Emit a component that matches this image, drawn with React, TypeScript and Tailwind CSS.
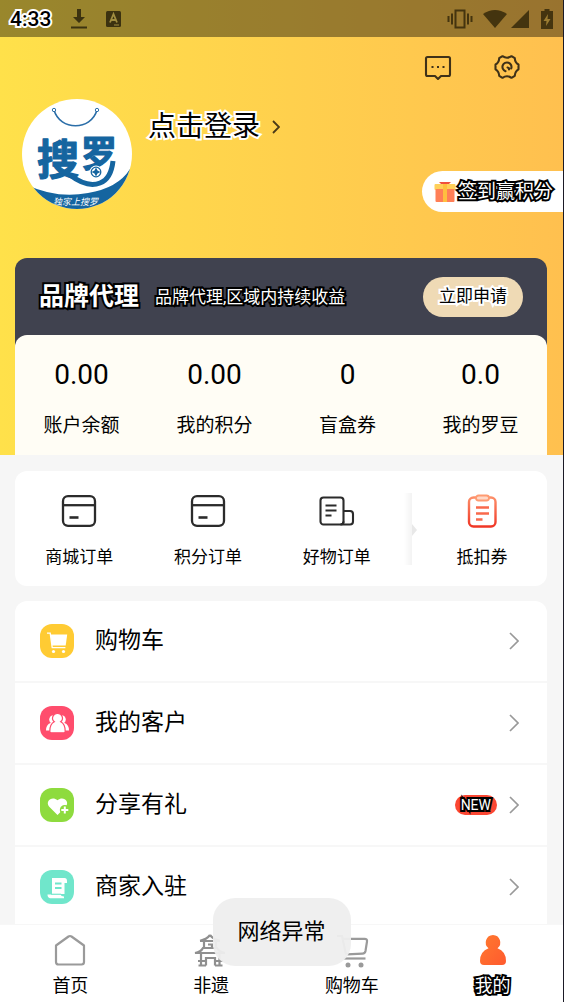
import type { ReactNode } from "react";

const darkOutline =
	"text-white [-webkit-text-stroke:4px_#000] [paint-order:stroke_fill]";
const lightOutline =
	"text-black [-webkit-text-stroke:4px_#fff] [paint-order:stroke_fill]";

const stats = [
	{ value: "0.00", label: "账户余额" },
	{ value: "0.00", label: "我的积分" },
	{ value: "0", label: "盲盒券" },
	{ value: "0.0", label: "我的罗豆" },
];

const orders = [
	{ label: "商城订单", icon: <CardIcon /> },
	{ label: "积分订单", icon: <CardIcon /> },
	{ label: "好物订单", icon: <DocIcon /> },
];

const menu = [
	{ label: "购物车", color: "bg-[#ffcb33]", icon: <CartGlyph />, isNew: false },
	{ label: "我的客户", color: "bg-[#ff4d6d]", icon: <PeopleGlyph />, isNew: false },
	{ label: "分享有礼", color: "bg-[#8edb3e]", icon: <HeartGlyph />, isNew: true },
	{ label: "商家入驻", color: "bg-[#70e6cb]", icon: <ScrollGlyph />, isNew: false },
];

const tabs = [
	{ label: "首页", icon: <HomeIcon />, active: false },
	{ label: "非遗", icon: <PavilionIcon />, active: false },
	{ label: "购物车", icon: <CartIcon />, active: false },
	{ label: "我的", icon: <PersonIcon />, active: true },
];

function CardIcon() {
	return (
		<svg className="size-9" viewBox="0 0 36 36" fill="none" stroke="#2b2b2b" strokeWidth="2.3">
			<rect x="2" y="3.2" width="32" height="29.6" rx="5" />
			<path d="M2 12.2h32" />
			<path d="M8.5 24.5h9" strokeWidth="2.6" />
		</svg>
	);
}

function DocIcon() {
	return (
		<svg className="size-9" viewBox="0 0 36 36" fill="none" stroke="#2b2b2b" strokeWidth="2.1">
			<rect x="1.5" y="4.5" width="23" height="27" rx="3" />
			<path d="M24.5 18H31q3 0 3 3v7.500q0 3-3 3H21.500q3 0 3-3" />
			<path d="M6.500 12.500h11M6.500 17.500h11M6.500 22.500h6" />
		</svg>
	);
}

function CouponIcon() {
	return (
		<svg className="size-9" viewBox="0 0 36 36" fill="none">
			<defs>
				<linearGradient id="coupon" x1="0" y1="0" x2="0" y2="36" gradientUnits="userSpaceOnUse">
					<stop stopColor="#ff9b72" />
					<stop offset="1" stopColor="#ef2f20" />
				</linearGradient>
			</defs>
			<rect x="5" y="4.5" width="26.5" height="29" rx="4.5" stroke="url(#coupon)" strokeWidth="2.4" />
			<rect x="12" y="2.5" width="13" height="5" rx="2.5" fill="#ffd9c8" stroke="#ff9b72" strokeWidth="1.8" />
			<path d="M12 14.5h13M12 20.5h13M12 26.5h6.5" stroke="#f9694c" strokeWidth="2.4" />
		</svg>
	);
}

function CartGlyph() {
	return (
		<svg className="size-full" viewBox="0 0 34 34" fill="#fff">
			<path d="M7 9.2h3.2l2 14.4h13.2" fill="none" stroke="#fff" strokeWidth="1.3" />
			<path d="M10.5 10.5h16.700l-1.500 11H12z" />
			<circle cx="13.5" cy="27.5" r="1.6" />
			<circle cx="23.5" cy="27.5" r="1.6" />
		</svg>
	);
}

function PeopleGlyph() {
	return (
		<svg className="size-full" viewBox="0 0 34 34" fill="#fff">
			<circle cx="13.5" cy="13.500" r="4.300" />
			<circle cx="21.500" cy="13.500" r="4.300" />
			<path d="M6 24.500q0-6 4.500-7.500h14q4.500 1.500 4.500 7.500z" />
			<path
				d="M17.500 7.500a4.600 4.600 0 0 1 3.200 8.200q4.500 2.200 4.500 9.500 0 1.600-1.400 1.600H11.200q-1.400 0-1.400-1.600 0-7.300 4.500-9.500a4.600 4.600 0 0 1 3.200-8.200z"
				stroke="#ff4d6d"
				strokeWidth="1.200"
			/>
		</svg>
	);
}

function HeartGlyph() {
	return (
		<svg className="size-full" viewBox="0 0 34 34" fill="#fff">
			<path d="M17.500 27 9 18.500c-4-5.500 3-11 8.500-6.300 5.500-4.700 12.500.8 8.500 6.300z" />
			<circle cx="24.800" cy="22" r="5" fill="#8edb3e" />
			<path d="M24.800 18.500v7M21.300 22h7" stroke="#fff" strokeWidth="2" />
		</svg>
	);
}

function ScrollGlyph() {
	return (
		<svg className="size-full" viewBox="0 0 34 34" fill="#fff">
			<path d="M12 8h12.500q2.500 0 2.500 3v2h-2.500v11H12z" />
			<path d="M7.500 24.500h13q.5 2 3.500 2v1.800H10q-2.500-.5-2.500-3.800z" />
			<path d="M15 13.500h6.500M15 18h6.500" stroke="#70e6cb" strokeWidth="1.800" />
			<path d="M11 24.200h10" stroke="#70e6cb" strokeWidth="1" />
		</svg>
	);
}

function HomeIcon() {
	return (
		<svg className="size-9" viewBox="0 0 36 36" fill="none" stroke="#9a9a9a" strokeWidth="2.200" strokeLinejoin="round">
			<path d="M4 13.500 16.500 4.500q1.500-1 3 0L32 13.500V30q0 2.500-2.500 2.500h-23Q4 32.500 4 30z" />
		</svg>
	);
}

function PavilionIcon() {
	return (
		<svg className="size-9" viewBox="0 0 36 36" fill="none" stroke="#8f8f8f" strokeWidth="2.200">
			<path d="M17 3q-3.500 4.500-10 5.800M17 3q3.500 4.500 10 5.800M7 9h20" />
			<path d="M11 9v7M23 9v7M15 12.500h4v4" />
			<path d="M10 16q-2 4-8 5h30q-6-1-8-5z" />
			<path d="M8 21v12.500M26.500 21v12.500M13 33.500V26h9v7.500M5 29h8M22 29h8M5.500 33.500H13M22 33.500h7.500" />
		</svg>
	);
}

function CartIcon() {
	return (
		<svg className="size-9" viewBox="0 0 36 36" fill="none" stroke="#9a9a9a" strokeWidth="2.200">
			<path d="M3 4h5l4 18.500" />
			<path d="M9 6.800h21.500q3 0 2.500 2.700L31.500 19q-.5 2.500-3 2.600L13 22.300" />
			<path d="M9.500 26.500h22" />
			<circle cx="14" cy="33" r="2.500" fill="#9a9a9a" stroke="none" />
			<circle cx="27" cy="33" r="2.500" fill="#9a9a9a" stroke="none" />
		</svg>
	);
}

function PersonIcon() {
	return (
		<svg className="size-9" viewBox="0 0 36 36">
			<defs>
				<linearGradient id="person" x1="0" y1="0" x2="1" y2="1">
					<stop stopColor="#ff7a2f" />
					<stop offset="1" stopColor="#ff5a2e" />
				</linearGradient>
			</defs>
			<path
				d="M18 3a7.500 7.500 0 0 1 4.500 13.300Q31 19.500 31 29q0 4-4 4H9q-4 0-4-4 0-9.500 8.500-12.700A7.500 7.500 0 0 1 18 3z"
				fill="url(#person)"
			/>
		</svg>
	);
}

function Logo() {
	return (
		<svg className="size-[110px] shrink-0" viewBox="0 0 110 110">
			<defs>
				<clipPath id="badge">
					<circle cx="55" cy="55" r="55" />
				</clipPath>
			</defs>
			<g clipPath="url(#badge)">
				<rect width="110" height="110" fill="#fff" />
				<path d="M32 11c6 21 37 21 43 0" fill="none" stroke="#2b6ea8" strokeWidth="1.600" />
				<circle cx="32" cy="11" r="1.700" fill="#fff" stroke="#2b6ea8" />
				<circle cx="75" cy="11" r="1.700" fill="#fff" stroke="#2b6ea8" />
				<path d="M5 86q30 14 61 8 30-5 42-24v42H5z" fill="#1565a0" />
				<g
					fill="#1565a0"
					stroke="#1565a0"
					strokeWidth="1.200"
					strokeLinejoin="round"
					className="font-['Noto_Sans_CJK_SC',sans-serif] font-bold"
				>
					<text x="15" y="76" fontSize="42">搜</text>
					<text x="59" y="68" fontSize="36">罗</text>
				</g>
				<path d="M48 76q17 13 30 8 11-4 13-22" fill="none" stroke="#1565a0" strokeWidth="5" />
				<circle cx="74" cy="73" r="6.500" fill="#fff" />
				<circle cx="74" cy="73" r="4.800" fill="none" stroke="#1565a0" strokeWidth="1.300" />
				<path d="M74 68.500l1.500 3 3 1.500-3 1.500-1.500 3-1.500-3-3-1.500 3-1.500z" fill="#1565a0" />
				<text
					x="31"
					y="106"
					fontSize="9"
					fill="#fff"
					className="font-['Noto_Sans_CJK_SC',sans-serif] italic"
				>
					独家上搜罗
				</text>
			</g>
		</svg>
	);
}

function StatusBar() {
	return (
		<div className="flex h-[37px] items-center bg-black/40 px-2.5">
			<span className={`text-[21px] leading-6 font-medium ${lightOutline}`}>4:33</span>
			<svg className="ml-5 h-5 w-4" viewBox="0 0 16 20" fill="#3c3210">
				<path d="M6 0h4v8h4l-6 6-6-6h4zM0 17.500h16v2H0z" />
			</svg>
			<svg className="ml-[19px] h-4 w-[15px]" viewBox="0 0 15 16">
				<rect width="15" height="16" rx="1.500" fill="#3c3210" />
				<path d="M4 11.500 7.500 3l3.500 8.500M5.200 9h4.600" fill="none" stroke="#a08d40" strokeWidth="1.800" />
				<path d="M8 14h5" stroke="#a08d40" />
			</svg>
			<div className="ml-auto flex items-center text-[#44340f]">
				<svg className="h-5 w-[26px]" viewBox="0 0 26 20" fill="none" stroke="currentColor" strokeWidth="2">
					<rect x="8.500" y="1.500" width="9" height="17" />
					<path d="M5 4.500v11M1.500 7v6M21 4.500v11M24.500 7v6" />
				</svg>
				<svg className="ml-[10px] h-[18px] w-6" viewBox="0 0 24 18" fill="currentColor">
					<path d="M0 4Q12-4 24 4L12 18z" />
				</svg>
				<svg className="ml-1 size-[18px]" viewBox="0 0 18 18" fill="currentColor">
					<path d="M18 0v18H0z" />
				</svg>
				<svg className="ml-3 h-5 w-3" viewBox="0 0 12 20">
					<path d="M3.500 0h5v2H12v18H0V2h3.500z" fill="currentColor" />
					<path d="M7 5 2.500 12h3L5 17l4.500-7h-3z" fill="#9b7c32" />
				</svg>
			</div>
		</div>
	);
}

function Hero() {
	return (
		<header className="bg-linear-to-r from-[#ffe14a] to-[#ffc04f]">
			<StatusBar />
			<div className="flex justify-end gap-[41px] pt-4 pr-[42px]">
				<button type="button" aria-label="消息" className="size-7">
					<svg viewBox="0 0 28 28" fill="none" stroke="#3f3118" strokeWidth="2.100" strokeLinejoin="round">
						<path d="M3.500 4h21q1.500 0 1.500 1.500v16q0 1.500-1.500 1.500H17l-3 3-3-3H3.500Q2 23 2 21.500v-16Q2 4 3.500 4z" />
						<path d="M7.500 14h2M13 14h2M18.500 14h2" />
					</svg>
				</button>
				<button type="button" aria-label="设置" className="size-7">
					<svg viewBox="0 0 28 28" fill="none" stroke="#3f3118" strokeWidth="2.100" strokeLinejoin="round" strokeLinecap="round">
						<path d="M9.500 3.200q4.500 3 9 0l3.300 2q.2 4.500 3.700 6.300v4.800q-3.500 2-3.700 6.500l-3.300 2q-4.500-3-9 0l-3.300-2q-.2-4.500-3.700-6.500v-4.800q3.500-1.800 3.700-6.300z" />
						<path d="M12.500 18.200A4.500 4.500 0 1 1 18.200 15.500M14.500 14.500q2 .5 1.500 2" />
					</svg>
				</button>
			</div>
			<div className="flex items-start pt-[18px] pl-[22px]">
				<Logo />
				<button type="button" className="mt-2.5 ml-4 flex items-center gap-3">
					<span className={`text-[28px] leading-9 ${lightOutline}`}>点击登录</span>
					<svg className="h-3.5 w-2" viewBox="0 0 8 14" fill="none" stroke="#4a3a18" strokeWidth="1.800">
						<path d="m1 1 6 6-6 6" />
					</svg>
				</button>
				<button
					type="button"
					className="mt-18 ml-auto flex h-[41px] items-center gap-0.5 rounded-l-full bg-white pr-2.5 pl-3"
				>
					<svg className="h-5 w-[22px]" viewBox="0 0 22 20">
						<path d="M5 0h12l-3 3H8z" fill="#f0503c" />
						<rect x="0.500" y="2" width="21" height="6" rx="1" fill="#ffd05a" />
						<rect x="1.500" y="7" width="19" height="13" rx="1" fill="#ff7f57" />
						<rect x="9" y="2" width="4" height="18" fill="#ffbf3f" />
					</svg>
					<span className={`text-[19px] leading-6 ${darkOutline}`}>签到赢积分</span>
				</button>
			</div>
			<div className="mt-[46px] mr-4 ml-[15px] rounded-t-xl bg-[#40424f]">
				<div className="flex h-[77px] items-center px-6">
					<h2 className={`text-[25px] leading-8 font-bold ${darkOutline}`}>品牌代理</h2>
					<p className={`ml-4 text-[17px] leading-6 ${darkOutline}`}>品牌代理,区域内持续收益</p>
					<button type="button" className="ml-auto h-10 rounded-full bg-[#efdab5] px-4">
						<span className={`text-[17px] leading-6 ${lightOutline}`}>立即申请</span>
					</button>
				</div>
				<dl className="grid h-[120px] grid-cols-4 rounded-t-xl bg-[#fffdf5] pt-5">
					{stats.map(({ value, label }) => (
						<div key={label} className="flex flex-col-reverse items-center justify-end gap-[17px]">
							<dt className="text-[19px] leading-7">{label}</dt>
							<dd className="text-[28px] leading-10">{value}</dd>
						</div>
					))}
				</dl>
			</div>
		</header>
	);
}

function OrderButton({ label, children }: { label: string; children: ReactNode }) {
	return (
		<button type="button" className="flex flex-col items-center gap-4">
			{children}
			<span className="text-[17px] leading-6">{label}</span>
		</button>
	);
}

function Orders() {
	return (
		<section className="mt-4 mr-4 ml-[15px] flex items-start rounded-xl bg-white pt-[22px] pb-[17px]">
			<div className="grid flex-1 grid-cols-3">
				{orders.map(({ label, icon }) => (
					<OrderButton key={label} label={label}>
						{icon}
					</OrderButton>
				))}
			</div>
			<svg className="h-[72px] w-4" viewBox="0 0 16 72">
				<defs>
					<linearGradient id="fold">
						<stop stopColor="#fff" />
						<stop offset="1" stopColor="#f3f3f3" />
					</linearGradient>
				</defs>
				<rect x="3" width="8" height="72" fill="url(#fold)" />
				<path d="m11 31 5 6-5 6z" fill="#e8e8e8" />
			</svg>
			<div className="grid w-[130px]">
				<OrderButton label="抵扣券">
					<CouponIcon />
				</OrderButton>
			</div>
		</section>
	);
}

function Menu() {
	return (
		<ul className="mt-[15px] mr-4 ml-[15px] rounded-t-xl bg-white">
			{menu.map(({ label, color, icon, isNew }) => (
				<li key={label} className="border-b-2 border-[#f7f7f7] last:border-0">
					<a href="#" className="flex h-20 items-center pr-7 pl-[25px]">
						<span className={`size-[34px] rounded-xl ${color}`}>{icon}</span>
						<span className="ml-[21px] text-[23px] leading-8">{label}</span>
						{isNew && (
							<span className={`ml-auto rounded-full bg-[#fb4733] px-1.5 text-sm leading-5 ${darkOutline}`}>
								NEW
							</span>
						)}
						<svg
							className={`h-[18px] w-2.5 ${isNew ? "ml-3" : "ml-auto"}`}
							viewBox="0 0 10 18"
							fill="none"
							stroke="#999"
							strokeWidth="1.700"
						>
							<path d="m1 1 8 8-8 8" />
						</svg>
					</a>
				</li>
			))}
		</ul>
	);
}

function TabBar() {
	return (
		<nav className="grid shrink-0 grid-cols-4 border-t border-[#f7f7f7] bg-white pt-[7px] pb-0.5">
			{tabs.map(({ label, icon, active }) => (
				<a key={label} href="#" className="flex flex-col items-center gap-1">
					{icon}
					<span className={`text-lg leading-7 ${active ? darkOutline : "text-black"}`}>{label}</span>
				</a>
			))}
		</nav>
	);
}

export default function App() {
	return (
		<div className="relative flex h-screen flex-col border-r border-[#1b1a26] bg-[#f6f6f6] font-[Roboto,'Noto_Sans_CJK_SC',sans-serif] text-black">
			<main className="min-h-0 flex-1 overflow-y-auto [scrollbar-width:none]">
				<Hero />
				<Orders />
				<Menu />
			</main>
			<TabBar />
			<div
				role="status"
				className="absolute bottom-9 left-1/2 -translate-x-1/2 rounded-[22px] bg-[#eee]/95 px-[25px] py-[18px] text-[22px] leading-8 whitespace-nowrap"
			>
				网络异常
			</div>
		</div>
	);
}
